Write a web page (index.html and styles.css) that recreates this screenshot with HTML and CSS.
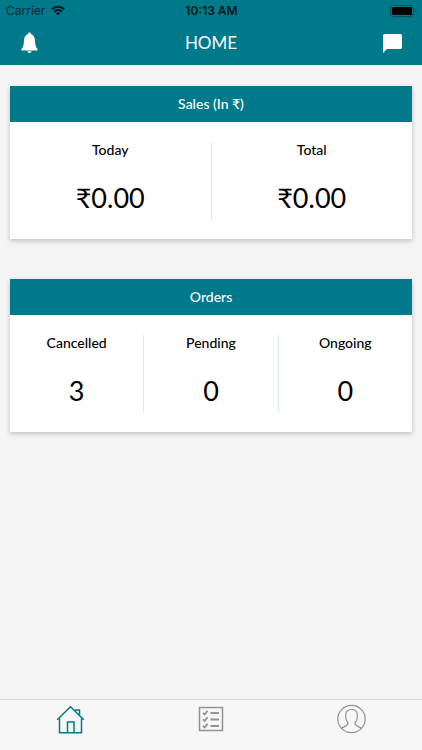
FILE: index.html
```html
<!DOCTYPE html>
<html lang="en">
<head>
<meta charset="utf-8">
<meta name="viewport" content="width=device-width, initial-scale=1">
<title>Home</title>
<link rel="stylesheet" href="styles.css">
</head>
<body>
<header class="top">
  <div class="status">
    <div class="carrier">
      <span>Carrier</span>
      <svg width="14" height="11" viewBox="0 0 14 11" fill="none" stroke="currentColor" stroke-width="2" aria-hidden="true"><path d="M.8 4.2a8.8 8.8 0 0 1 12.4 0M3.1 6.7a5.5 5.5 0 0 1 7.8 0"/><path d="M7 10.5 4.9 8.4a3 3 0 0 1 4.2 0z" fill="currentColor" stroke="none"/></svg>
    </div>
    <div class="clock">10:13 AM</div>
    <div class="battery">
      <svg width="27" height="12" viewBox="0 0 27 12" aria-hidden="true"><rect x=".5" y=".5" width="23" height="11" rx="2.5" fill="none" stroke="#064f5b"/><rect x="2" y="2" width="20" height="8" rx="1" fill="#000"/><path d="M25 4q1.5.5 1.5 2T25 8z" fill="#064f5b"/></svg>
    </div>
  </div>
  <div class="nav">
    <button class="icon-button" type="button" aria-label="Notifications">
      <svg width="17" height="22" viewBox="0 0 17 22" fill="#fff" aria-hidden="true"><path d="M8.5.5c-1 0-1.500.7-1.500 1.600C4.200 3 3.200 5.500 3 8.500c-.2 4-.6 6.200-2.400 8.500-.5.700-.3 1.500.5 1.500h14.800c.8 0 1-.8.500-1.500-1.800-2.300-2.200-4.500-2.400-8.500-.2-3-1.200-5.500-4-6.400 0-.9-.5-1.600-1.500-1.600zM6.300 19.300h4.400c-.3 1.100-1.100 1.700-2.200 1.700s-1.900-.6-2.200-1.700z"/></svg>
    </button>
    <h1 class="title">HOME</h1>
    <button class="icon-button" type="button" aria-label="Messages">
      <svg width="19" height="19" viewBox="0 0 19 19" fill="#fff" aria-hidden="true"><path d="M1.500 0h16A1.500 1.500 0 0 1 19 1.500v12a1.500 1.500 0 0 1-1.500 1.500H4L0 19V1.500A1.500 1.500 0 0 1 1.500 0z"/></svg>
    </button>
  </div>
</header>

<main class="content">
  <section class="card">
    <h2 class="card-title">Sales (In ₹)</h2>
    <dl class="stats">
      <div class="stat"><dt>Today</dt><dd>₹0.00</dd></div>
      <div class="stat"><dt>Total</dt><dd>₹0.00</dd></div>
    </dl>
  </section>
  <section class="card">
    <h2 class="card-title">Orders</h2>
    <dl class="stats">
      <div class="stat"><dt>Cancelled</dt><dd>3</dd></div>
      <div class="stat"><dt>Pending</dt><dd>0</dd></div>
      <div class="stat"><dt>Ongoing</dt><dd>0</dd></div>
    </dl>
  </section>
</main>

<nav class="tabs">
  <a class="tab active" href="#home" aria-label="Home">
    <svg width="30" height="30" viewBox="0 0 30 30" fill="none" stroke="currentColor" stroke-width="1.5" aria-hidden="true"><path d="M2.200 15.800 15.500 2.700l13.300 13.100M4.500 14.500v14.300h22V14.500M20 6h4.500v5.500M12.500 28.500V18h6.500v10.500"/></svg>
  </a>
  <a class="tab" href="#orders" aria-label="Orders">
    <svg width="30" height="30" viewBox="0 0 30 30" fill="none" stroke="currentColor" stroke-width="1.5" aria-hidden="true"><rect x="3.5" y="3.5" width="23" height="23"/><path d="m7 8.800 1.600 1.700 3-3.600M7 15.300 8.600 17l3-3.600M7 21.800l1.600 1.700 3-3.600" stroke-width="1.8"/><path d="M14.500 9h8.500M14.500 15.500h8.500M14.500 22h8.500" stroke-width="1.8"/></svg>
  </a>
  <a class="tab" href="#profile" aria-label="Profile">
    <svg width="30" height="30" viewBox="0 0 30 30" fill="none" stroke="currentColor" stroke-width="1.2" aria-hidden="true"><circle cx="14.500" cy="15" r="13.700"/><path d="M4.500 24.500C6.500 22.500 11 22 11 19.500c0-1.500-1.700-2.500-2-4.500-.2-1.600-.4-3.600-.2-5 .4-3 2.500-4.500 5.700-4.500s5.300 1.500 5.700 4.500c.2 1.400 0 3.400-.2 5-.3 2-2 3-2 4.500 0 2.500 4.500 3 6.500 5"/></svg>
  </a>
</nav>
</body>
</html>
```
FILE: styles.css
```css
* {
  box-sizing: border-box;
}

body {
  margin: 0;
  min-height: 100vh;
  display: flex;
  flex-direction: column;
  background: #f5f5f5;
  color: #000;
  font-family: Lato, "Liberation Sans", sans-serif;
}

.top {
  background: #00798a;
}

.status {
  display: grid;
  grid-template-columns: 1fr auto 1fr;
  align-items: center;
  height: 21px;
  padding: 0 5px 0 6px;
  color: #062a31;
  font: 12px/20px Inter, sans-serif;
}

.carrier {
  display: flex;
  align-items: center;
  gap: 6px;
}

.carrier svg {
  color: #021518;
}

.clock {
  color: #021518;
  font-weight: 600;
}

.battery {
  display: flex;
  justify-content: flex-end;
}

.nav {
  display: flex;
  align-items: center;
  justify-content: space-between;
  height: 44px;
  padding: 0 15px;
}

.icon-button {
  display: flex;
  align-items: center;
  justify-content: center;
  width: 28px;
  height: 44px;
  padding: 0;
  border: 0;
  background: none;
}

.title {
  margin: 0;
  color: #fff;
  font-size: 17px;
  font-weight: 400;
  line-height: 24px;
}

.content {
  flex: 1;
  display: flex;
  flex-direction: column;
  gap: 40px;
  padding: 21px 10px;
}

.card {
  background: #fff;
  box-shadow: 0 2px 5px rgba(0, 0, 0, 0.22);
}

.card-title {
  margin: 0;
  background: #00798a;
  color: #fff;
  font-size: 14px;
  font-weight: 500;
  line-height: 36px;
  text-align: center;
}

.stats {
  display: flex;
  margin: 0;
  padding: 20px 0;
}

.stat {
  flex: 1;
  display: flex;
  flex-direction: column;
  gap: 21px;
  height: 77px;
  text-align: center;
}

.stat + .stat {
  border-left: 1px solid #d5ebfa;
}

.stat dt {
  font-size: 14px;
  font-weight: 500;
  line-height: 16px;
}

.stat dd {
  margin: 0;
  font-size: 27px;
  line-height: 38px;
}

.tabs {
  display: flex;
  height: 51px;
  border-top: 1px solid #dcdcdc;
  background: #f7f7f7;
}

.tab {
  flex: 1;
  display: flex;
  justify-content: center;
  padding-top: 4px;
  color: #929292;
}

.tab.active {
  color: #00798a;
}
```
